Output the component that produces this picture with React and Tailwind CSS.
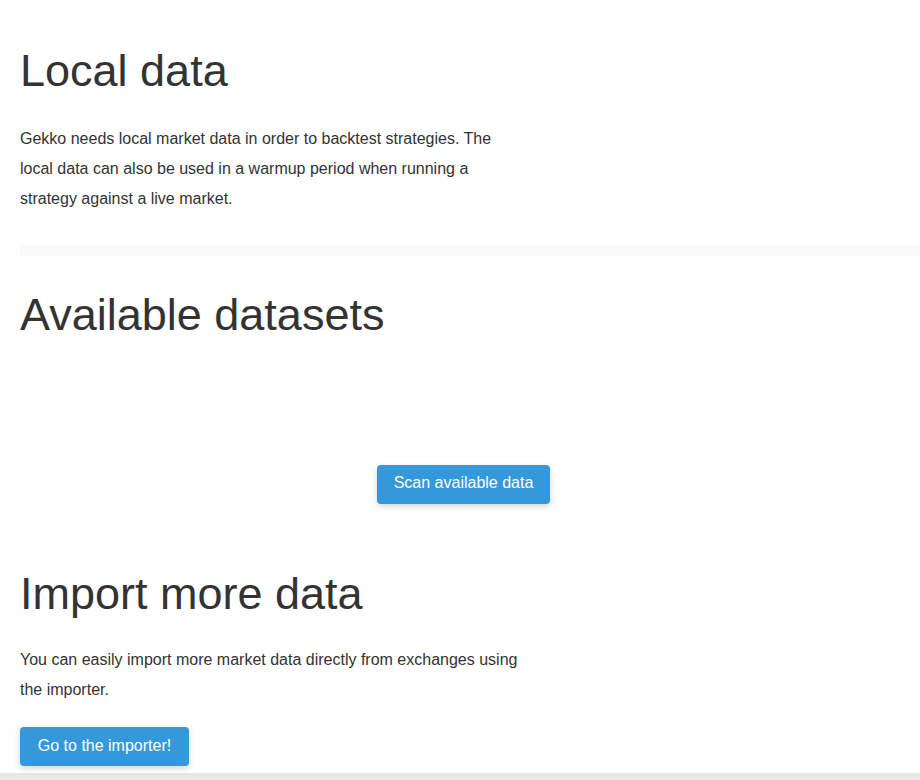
export default function App() {
  return (
    <div className="min-h-[780px] bg-white text-[#333] overflow-hidden" style={{ fontFamily: '"Liberation Sans", Arial, sans-serif' }}>
      <div className="pl-5">
        <h1 className="pt-[48px] text-[45px] leading-[45px] font-normal">Local data</h1>
        <p className="mt-[31px] max-w-[500px] text-[16px] leading-[30px]">
          Gekko needs local market data in order to backtest strategies. The local data can also be used in a warmup period when running a strategy against a live market.
        </p>
        <div className="mt-[31px] h-[11px] bg-[#fafafa]"></div>
        <h2 className="mt-[36px] text-[45px] leading-[45px] font-normal">Available datasets</h2>
        <div className="mt-[128px] flex justify-center pr-[13px]">
          <button className="h-[39px] w-[173px] rounded-[4px] bg-[#3498db] pb-[3px] text-[16px] text-white shadow-[0_2px_6px_rgba(0,0,0,0.18)]">
            Scan available data
          </button>
        </div>
        <h2 className="mt-[67px] text-[45px] leading-[45px] font-normal">Import more data</h2>
        <p className="mt-[29px] max-w-[500px] text-[16px] leading-[30px]">
          You can easily import more market data directly from exchanges using the importer.
        </p>
        <button className="mt-[22px] h-[39px] w-[169px] rounded-[4px] bg-[#3498db] pb-[2px] text-[16px] text-white shadow-[0_2px_6px_rgba(0,0,0,0.18)]">
          Go to the importer!
        </button>
      </div>
      <div className="mt-[7px] h-[20px] bg-gradient-to-b from-[#e6e6e6] to-[#f7f7f7]"></div>
    </div>
  );
}
